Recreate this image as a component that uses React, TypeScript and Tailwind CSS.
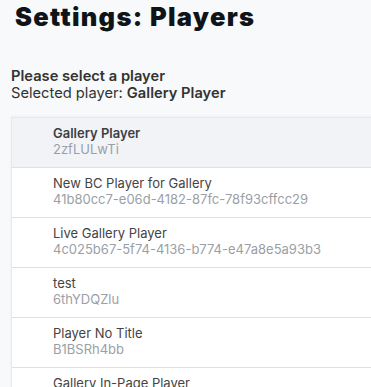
const players = [
  { name: "Gallery Player", id: "2zfLULwTi", selected: true },
  { name: "New BC Player for Gallery", id: "41b80cc7-e06d-4182-87fc-78f93cffcc29" },
  { name: "Live Gallery Player", id: "4c025b67-5f74-4136-b774-e47a8e5a93b3" },
  { name: "test", id: "6thYDQZlu" },
  { name: "Player No Title", id: "B1BSRh4bb" },
  { name: "Gallery In-Page Player", id: "SkDr8x9Yb" },
];

export default function App() {
  return (
    <div className="h-[387px] overflow-hidden bg-[#f8f9fa] font-['Inter',sans-serif]">
      <h1 className="px-[15px] pt-[1px] text-[25.5px] leading-[32px] font-black text-[#0f1419] tracking-[1.3px]">
        Settings: Players
      </h1>
      <div className="mt-[35px] px-[11px] text-[14.7px] leading-[17px] text-[#333]">
        <p className="font-semibold">Please select a player</p>
        <p>
          Selected player: <span className="font-semibold">Gallery Player</span>
        </p>
      </div>
      <ul className="mt-[15px] ml-[11px] w-[400px] bg-white border-l border-t border-[#e6e8ec] shadow-[0_-1px_3px_rgba(0,0,0,0.04)]">
        {players.map((p) => (
          <li
            key={p.id}
            className={`h-[50px] pl-[41px] pt-[7px] border-b border-[#dde0e4] ${
              p.selected ? "bg-[#f1f3f7]" : "bg-white"
            }`}
          >
            <div
              className={`text-[13px] leading-[16px] ${
                p.selected ? "font-semibold text-[#3a3f45]" : "text-[#444]"
              }`}
            >
              {p.name}
            </div>
            <div className="text-[13px] leading-[16px] text-[#9aa0a6]">{p.id}</div>
          </li>
        ))}
      </ul>
    </div>
  );
}
